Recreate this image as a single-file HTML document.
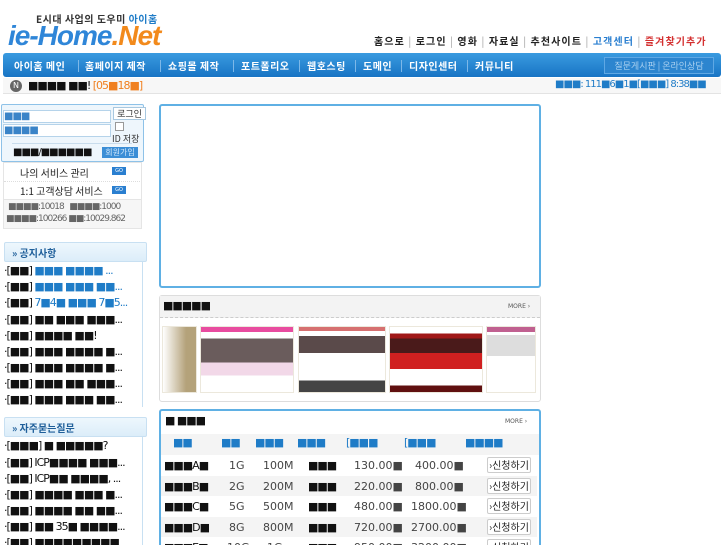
<!DOCTYPE html>
<html><head><meta charset="utf-8">
<style>
*{margin:0;padding:0;box-sizing:border-box}
html,body{width:727px;height:545px;overflow:hidden}
body{background:#fff;font-family:"DejaVu Sans","Liberation Sans","Noto Sans CJK KR",sans-serif;font-size:11px;color:#333;position:relative}
.a{position:absolute;white-space:nowrap}
.k{font-family:"Noto Sans CJK KR","Liberation Sans",sans-serif}
.sq{font-family:"DejaVu Sans",sans-serif;letter-spacing:-1px}
.blue{color:#1f7cc7}
.n{position:absolute;top:58px;font-size:10px;font-weight:bold;color:#fff;font-family:"Noto Sans CJK KR",sans-serif;letter-spacing:0.5px;white-space:nowrap}
.sep{position:absolute;top:60px;height:12px;border-left:1px solid #7db8e8}
.li{position:absolute;left:4px;font-size:11px;color:#111;white-space:nowrap}
.row{position:absolute;left:4px;width:376px;height:21px;font-size:11px;color:#444}
.row div{position:absolute;top:4px;white-space:nowrap}
.btn{position:absolute;right:6px;top:2px;width:44px;height:16px;border:1px solid #ccc;border-radius:2px;background:#fff;font-size:10px;color:#222;text-align:center;line-height:14px;white-space:nowrap;overflow:hidden}
</style></head><body>
<!-- header -->
<div class="a k" style="left:36px;top:11px;font-size:10px;color:#333;font-weight:bold;letter-spacing:0.5px">E시대 사업의 도우미 <span class="blue">아이홈</span></div>
<div class="a" style="left:8px;top:20px;font-size:28px;font-style:italic;font-weight:bold;color:#2f86d8;font-family:'Liberation Sans',sans-serif;letter-spacing:-1px;line-height:32px">ie-Home<span style="color:#f28a1c">.Net</span></div>
<div class="a k" style="left:374px;top:33px;font-size:10px;font-weight:bold;color:#222;letter-spacing:1.1px">홈으로 <span style="color:#bbb">|</span> 로그인 <span style="color:#bbb">|</span> 영화 <span style="color:#bbb">|</span> 자료실 <span style="color:#bbb">|</span> 추천사이트 <span style="color:#bbb">|</span> <span style="color:#2a7fd0">고객센터</span> <span style="color:#bbb">|</span> <span style="color:#d43030">즐겨찾기추가</span></div>
<div class="a" style="left:3px;top:53px;width:718px;height:24px;background:linear-gradient(#3a9be0,#1874c4);border-radius:3px"></div>
<div class="n" style="left:14px">아이홈 메인</div><div class="sep" style="left:78px"></div>
<div class="n" style="left:85px">홈페이지 제작</div><div class="sep" style="left:160px"></div>
<div class="n" style="left:168px">쇼핑몰 제작</div><div class="sep" style="left:233px"></div>
<div class="n" style="left:241px">포트폴리오</div><div class="sep" style="left:299px"></div>
<div class="n" style="left:307px">웹호스팅</div><div class="sep" style="left:355px"></div>
<div class="n" style="left:363px">도메인</div><div class="sep" style="left:401px"></div>
<div class="n" style="left:409px">디자인센터</div><div class="sep" style="left:467px"></div>
<div class="n" style="left:475px">커뮤니티</div>
<div class="a k" style="left:604px;top:57px;width:110px;height:17px;border:1px solid #5fa8e4;background:#2c85cf;color:#a9d0f0;font-size:9px;line-height:15px;text-align:center">질문게시판 | 온라인상담</div>
<div class="a" style="left:3px;top:78px;width:718px;height:16px;background:#f7f7f7;border-bottom:1px solid #e3e3e3"></div>
<div class="a" style="left:10px;top:80px;width:12px;height:12px;border-radius:6px;background:#666;color:#fff;font-size:8px;text-align:center;line-height:12px">N</div>
<div class="a sq" style="left:28px;top:79px;font-size:11px;color:#111">■■■■ ■■! <span style="color:#f08020">[05■18■]</span></div>
<div class="a sq" style="left:555px;top:79px;font-size:10px;color:#1f7cc7">■■■: 111■6■1■[■■■] 8:38■■</div>
<!-- login -->
<div class="a" style="left:1px;top:104px;width:143px;height:58px;border:1px solid #8ec2e8;background:#eef6fc;border-radius:2px"></div>
<div class="a sq" style="left:3px;top:110px;width:108px;height:13px;border:1px solid #b5d3ea;background:#fff;color:#3a84c8;font-size:10px">■■■</div>
<div class="a sq" style="left:3px;top:124px;width:108px;height:13px;border:1px solid #b5d3ea;background:#fff;color:#3a84c8;font-size:10px">■■■■</div>
<div class="a k" style="left:113px;top:107px;width:33px;height:13px;border:1px solid #a8c8e0;background:#fff;font-size:9px;line-height:11px;text-align:center">로그인</div>
<div class="a" style="left:115px;top:122px;width:9px;height:9px;border:1px solid #999;background:#fff"></div>
<div class="a k" style="left:112px;top:132px;font-size:9px;color:#333">ID 저장</div>
<div class="a" style="left:12px;top:143px;width:120px;border-top:1px solid #c8dcec"></div>
<div class="a sq" style="left:13px;top:147px;font-size:10px;color:#111">■■■/■■■■■■</div>
<div class="a k" style="left:102px;top:147px;width:36px;height:11px;background:#3b8ed6;color:#cfe6fa;font-size:8px;line-height:11px;text-align:center">회원가입</div>
<div class="a" style="left:3px;top:162px;width:139px;height:67px;border:1px solid #e5e5e5;background:#fff"></div>
<div class="a k" style="left:20px;top:165px;font-size:10px;color:#222">나의 서비스 관리</div>
<div class="a" style="left:112px;top:167px;width:14px;height:8px;background:#2a7fd0;color:#fff;font-size:5px;text-align:center;line-height:8px">GO</div>
<div class="a" style="left:4px;top:181px;width:136px;border-top:1px dotted #ddd"></div>
<div class="a k" style="left:20px;top:183px;font-size:10px;color:#222">1:1 고객상담 서비스</div>
<div class="a" style="left:112px;top:186px;width:14px;height:8px;background:#2a7fd0;color:#fff;font-size:5px;text-align:center;line-height:8px">GO</div>
<div class="a" style="left:3px;top:199px;width:139px;height:30px;background:#f6f6f6;border:1px solid #e5e5e5"></div>
<div class="a sq" style="left:8px;top:202px;font-size:9px;color:#666">■■■■:10018 &nbsp;&nbsp;■■■■:1000</div>
<div class="a sq" style="left:6px;top:214px;font-size:9px;color:#666">■■■■:100266 ■■:10029.862</div>
<!-- notice -->
<div class="a" style="left:4px;top:242px;width:143px;height:20px;background:linear-gradient(#eef7fd,#dcedf9);border:1px solid #c8e0f2;border-radius:2px"></div>
<div class="a k" style="left:12px;top:245px;font-size:10px;font-weight:bold;color:#1f5f9a">» 공지사항</div>
<div class="a" style="left:142px;top:262px;height:145px;border-left:1px solid #c8e0f2"></div>
<div class="li sq" style="top:264px">·[■■] <span class="blue">■■■ ■■■■ ...</span></div>
<div class="li sq" style="top:280px">·[■■] <span class="blue">■■■ ■■■ ■■...</span></div>
<div class="li sq" style="top:296px">·[■■] <span class="blue">7■4■ ■■■ 7■5...</span></div>
<div class="li sq" style="top:313px">·[■■] ■■ ■■■ ■■■...</div>
<div class="li sq" style="top:329px">·[■■] ■■■■ ■■!</div>
<div class="li sq" style="top:345px">·[■■] ■■■ ■■■■ ■...</div>
<div class="li sq" style="top:361px">·[■■] ■■■ ■■■■ ■...</div>
<div class="li sq" style="top:377px">·[■■] ■■■ ■■ ■■■...</div>
<div class="li sq" style="top:393px">·[■■] ■■■ ■■■ ■■...</div>
<div class="a" style="left:4px;top:417px;width:143px;height:20px;background:linear-gradient(#eef7fd,#dcedf9);border:1px solid #c8e0f2;border-radius:2px"></div>
<div class="a k" style="left:12px;top:420px;font-size:10px;font-weight:bold;color:#1f5f9a">» 자주묻는질문</div>
<div class="a" style="left:142px;top:437px;height:110px;border-left:1px solid #c8e0f2"></div>
<div class="li sq" style="top:439px">·[■■■] ■ ■■■■■?</div>
<div class="li sq" style="top:456px">·[■■] ICP■■■■ ■■■...</div>
<div class="li sq" style="top:472px">·[■■] ICP■■ ■■■■, ...</div>
<div class="li sq" style="top:488px">·[■■] ■■■■ ■■■ ■...</div>
<div class="li sq" style="top:504px">·[■■] ■■■■ ■■ ■■...</div>
<div class="li sq" style="top:520px">·[■■] ■■ 35■ ■■■■...</div>
<div class="li sq" style="top:536px">·[■■] ■■■■■■■■■</div>
<!-- center -->
<div class="a" style="left:159px;top:104px;width:382px;height:184px;border:2px solid #5fb0e4;border-radius:3px"></div>
<div class="a" style="left:159px;top:295px;width:382px;height:107px;border:1px solid #ddd;border-radius:3px;background:#fff"></div>
<div class="a" style="left:160px;top:296px;width:380px;height:22px;background:#f3f3f3;border-bottom:1px dashed #ccc"></div>
<div class="a sq" style="left:163px;top:299px;font-size:11px;color:#111">■■■■■</div>
<div class="a" style="left:508px;top:303px;font-size:6px;color:#555">MORE ›</div>
<div class="a" style="left:162px;top:326px;width:35px;height:67px;background:linear-gradient(90deg,#fff,#b4a27a 70%);border:1px solid #ece8dc"></div>
<div class="a" style="left:200px;top:326px;width:94px;height:67px;border:1px solid #ece8dc;background:linear-gradient(#e84ca0 0 8%,#fff 8% 18%,#6a5c5c 18% 55%,#f2d8e8 55% 75%,#fff 75%)"></div>
<div class="a" style="left:298px;top:326px;width:88px;height:67px;border:1px solid #ece8dc;background:linear-gradient(#d67070 0 6%,#fff 6% 14%,#5a4a4a 14% 40%,#fff 40% 82%,#444 82%)"></div>
<div class="a" style="left:389px;top:326px;width:94px;height:67px;border:1px solid #ece8dc;background:linear-gradient(#fff 0 10%,#a01818 10% 18%,#4a1a1a 18% 40%,#d02020 40% 65%,#fff 65% 90%,#601010 90%)"></div>
<div class="a" style="left:486px;top:326px;width:50px;height:67px;border:1px solid #ece8dc;background:linear-gradient(#c06090 0 8%,#fff 8% 12%,#ddd 12% 45%,#fff 45%)"></div>
<div class="a" style="left:159px;top:409px;width:382px;height:140px;border:2px solid #5fb0e4;border-radius:3px;background:#fff"></div>
<div class="a sq" style="left:165px;top:414px;font-size:11px;color:#111">■ ■■■</div>
<div class="a" style="left:505px;top:418px;font-size:6px;color:#555">MORE ›</div>
<div class="a" style="left:161px;top:434px;width:378px;height:21px;background:#f4f4f4"></div>
<div class="a sq" style="left:173px;top:436px;font-size:11px;color:#1f7cc7">■■</div>
<div class="a sq" style="left:221px;top:436px;font-size:11px;color:#1f7cc7">■■</div>
<div class="a sq" style="left:255px;top:436px;font-size:11px;color:#1f7cc7">■■■</div>
<div class="a sq" style="left:297px;top:436px;font-size:11px;color:#1f7cc7">■■■</div>
<div class="a sq" style="left:346px;top:436px;font-size:11px;color:#1f7cc7">[■■■</div>
<div class="a sq" style="left:404px;top:436px;font-size:11px;color:#1f7cc7">[■■■</div>
<div class="a sq" style="left:465px;top:436px;font-size:11px;color:#1f7cc7">■■■■</div>
<div class="row" style="left:161px;top:455px;background:#fff"><div class="sq" style="left:3px;color:#111">■■■A■</div><div style="left:68px">1G</div><div style="left:102px">100M</div><div class="sq" style="left:147px;color:#111">■■■</div><div style="left:193px">130.00■</div><div style="left:254px">400.00■</div><span class="btn k">›신청하기</span></div>
<div class="row" style="left:161px;top:476px;background:#f4f4f4"><div class="sq" style="left:3px;color:#111">■■■B■</div><div style="left:68px">2G</div><div style="left:102px">200M</div><div class="sq" style="left:147px;color:#111">■■■</div><div style="left:193px">220.00■</div><div style="left:254px">800.00■</div><span class="btn k">›신청하기</span></div>
<div class="row" style="left:161px;top:496px;background:#fff"><div class="sq" style="left:3px;color:#111">■■■C■</div><div style="left:68px">5G</div><div style="left:102px">500M</div><div class="sq" style="left:147px;color:#111">■■■</div><div style="left:193px">480.00■</div><div style="left:250px">1800.00■</div><span class="btn k">›신청하기</span></div>
<div class="row" style="left:161px;top:517px;background:#f4f4f4"><div class="sq" style="left:3px;color:#111">■■■D■</div><div style="left:68px">8G</div><div style="left:102px">800M</div><div class="sq" style="left:147px;color:#111">■■■</div><div style="left:193px">720.00■</div><div style="left:250px">2700.00■</div><span class="btn k">›신청하기</span></div>
<div class="row" style="left:161px;top:537px;background:#fff"><div class="sq" style="left:3px;color:#111">■■■E■</div><div style="left:66px">10G</div><div style="left:106px">1G</div><div class="sq" style="left:147px;color:#111">■■■</div><div style="left:193px">950.00■</div><div style="left:250px">3200.00■</div><span class="btn k">›신청하기</span></div>
</body></html>
